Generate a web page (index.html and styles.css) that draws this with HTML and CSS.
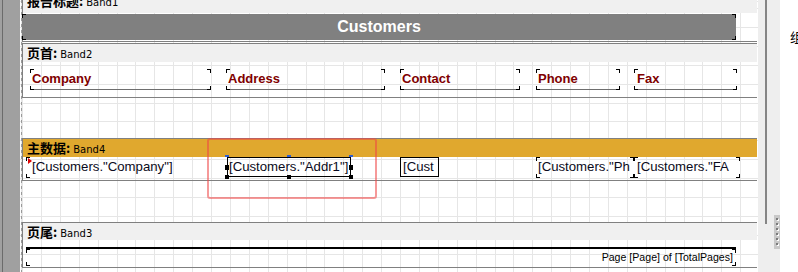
FILE: index.html
```html
<!DOCTYPE html>
<html lang="zh-CN">
<head>
    <meta charset="UTF-8">
    <title>报表设计器</title>
    <link rel="stylesheet" href="styles.css">
</head>
<body>
<div class="designer">
    <div class="gutter"></div>

    <div class="page">
        <div class="band band-title">
            <div class="band-head"><b>报告标题:</b><span>Band1</span></div>
            <div class="band-body">
                <div class="title-bar marks">Customers</div>
            </div>
        </div>

        <div class="band band-header">
            <div class="band-head"><b>页首:</b><span>Band2</span></div>
            <div class="band-body">
                <div class="cell head h-company">Company</div>
                <div class="cell head h-address">Address</div>
                <div class="cell head h-contact">Contact</div>
                <div class="cell head h-phone">Phone</div>
                <div class="cell head h-fax">Fax</div>
            </div>
        </div>

        <div class="band band-data">
            <div class="band-head"><b>主数据:</b><span>Band4</span></div>
            <div class="band-body">
                <div class="cell data d-company left-marks"><span class="flag"></span>[Customers."Company"]</div>
                <div class="cell data d-addr">[Customers."Addr1"]
                    <span class="hdl blue tl"></span><span class="hdl blue tm"></span><span class="hdl blue tr"></span>
                    <span class="hdl ml"></span><span class="hdl mr"></span>
                    <span class="hdl bl"></span><span class="hdl bm"></span><span class="hdl br"></span>
                </div>
                <div class="cell data d-contact">[Cust</div>
                <div class="cell data d-phone marks">[Customers."Ph</div>
                <div class="cell data d-fax marks">[Customers."FA</div>
            </div>
        </div>

        <div class="band band-footer">
            <div class="band-head"><b>页尾:</b><span>Band3</span></div>
            <div class="band-body">
                <div class="page-no marks">Page [Page] of [TotalPages]</div>
            </div>
        </div>

        <div class="highlight"></div>
    </div>

    <div class="scroll"><div class="thumb"></div></div>
    <div class="splitter">
        <div class="grip"><i></i><i></i><i></i><i></i><i></i><i></i></div>
    </div>
    <div class="side">组</div>
</div>
</body>
</html>
```

FILE: styles.css
```css
* {
    box-sizing: border-box;
}
html, body {
    margin: 0;
    padding: 0;
}
body {
    width: 798px;
    height: 272px;
    overflow: hidden;
    background: #fff;
    font-family: "Liberation Sans", Arial, sans-serif;
    color: #000;
}
:root {
    --mk: linear-gradient(#000, #000);
}
.designer {
    display: flex;
    height: 272px;
}
.gutter {
    width: 20px;
    flex: none;
    background: linear-gradient(to right, #a0a0a0 0 2px, #6b6b6b 2px 3px, #a0a0a0 3px);
}

/* report page with grid */
.page {
    position: relative;
    width: 738px;
    flex: none;
    padding-left: 2px;
    background-color: #fff;
    background-image:
        repeating-linear-gradient(to bottom, #9a9a9a 0 3px, transparent 3px 6px),
        repeating-linear-gradient(to right, #e6e6e6 0 1px, transparent 1px 18.9px),
        repeating-linear-gradient(to bottom, #e6e6e6 0 1px, transparent 1px 18.9px);
    background-position: 1px 0, 2px 0, 0 8px;
    background-size: 1px 100%, auto, auto;
    background-repeat: no-repeat, repeat, repeat;
}

/* bands */
.band {
    margin-right: 1px;
    border: 1px solid #808080;
    border-right: 0;
}
.band-head {
    height: 18px;
    padding-left: 4px;
    background: #f0f0f0;
    font-size: 10px;
    font-family: "DejaVu Sans", sans-serif;
    line-height: 18px;
    white-space: nowrap;
    overflow: hidden;
}
.band-head b {
    font-family: "Noto Sans CJK SC", sans-serif;
    font-size: 13px;
    font-weight: bold;
}
.band-head span {
    margin-left: 3px;
}
.band-title {
    margin-top: -6px;
}
.band-title .band-head {
    line-height: 12px;
}
.band-title .band-body {
    height: 28px;
    padding-top: 1px;
}
.band-header {
    margin-top: 1px;
}
.band-header .band-body {
    display: flex;
    height: 35px;
    padding-top: 7px;
}
.band-data {
    margin-top: 40px;
}
.band-data .band-head {
    background: #e0a82e;
}
.band-data .band-body {
    display: flex;
    height: 23px;
}
.band-footer {
    margin-top: 41px;
}
.band-footer .band-head {
    height: 17px;
    line-height: 17px;
}
.band-footer .band-body {
    height: 27px;
    padding-top: 7px;
    padding-left: 3px;
}

/* corner marks */
.marks {
    background-image: var(--mk), var(--mk), var(--mk), var(--mk), var(--mk), var(--mk), var(--mk), var(--mk);
    background-position: left top, left top, right top, right top, left bottom, left bottom, right bottom, right bottom;
    background-size: 4px 1px, 1px 4px, 4px 1px, 1px 4px, 4px 1px, 1px 4px, 4px 1px, 1px 4px;
    background-repeat: no-repeat;
}
.left-marks {
    background-image: var(--mk), var(--mk), var(--mk), var(--mk);
    background-position: left top, left top, left bottom, left bottom;
    background-size: 4px 1px, 1px 4px, 4px 1px, 1px 4px;
    background-repeat: no-repeat;
}

.title-bar {
    margin-left: -1px;
    width: 714px;
    height: 26px;
    background-color: #808080;
    color: #fff;
    font: bold 16px "Liberation Sans", Arial, sans-serif;
    line-height: 26px;
    text-align: center;
}

/* text objects */
.cell {
    flex: none;
    height: 21px;
    white-space: nowrap;
    overflow: hidden;
}
.head {
    padding: 0 2px;
    color: #800000;
    font: bold 13px "Liberation Sans", Arial, sans-serif;
    line-height: 20px;
    background-image: var(--mk), var(--mk), var(--mk), var(--mk), var(--mk), var(--mk), var(--mk), var(--mk), linear-gradient(#6e6e6e, #6e6e6e);
    background-position: left top, left top, right top, right top, left bottom, left bottom, right bottom, right bottom, left bottom;
    background-size: 4px 1px, 1px 4px, 4px 1px, 1px 4px, 4px 1px, 1px 4px, 4px 1px, 1px 4px, 100% 1px;
    background-repeat: no-repeat;
}
.h-company { margin-left: 7px; width: 181px; }
.h-address { margin-left: 15px; width: 159px; }
.h-contact { margin-left: 15px; width: 120px; }
.h-phone { margin-left: 16px; width: 84px; }
.h-fax { margin-left: 14px; width: 103px; padding-left: 3px; }

.data {
    padding-left: 2px;
    font-size: 13.2px;
    line-height: 19px;
    color: #0a0a20;
}
.d-company {
    position: relative;
    margin-left: 3px;
    width: 180px;
    padding-left: 6px;
}
.flag {
    position: absolute;
    left: 2px;
    top: 1px;
    border-left: 4px solid #e00000;
    border-top: 3px solid transparent;
    border-bottom: 3px solid transparent;
}
.d-addr {
    position: relative;
    overflow: visible;
    margin-left: 21px;
    width: 124px;
    height: 20px;
    padding-left: 1px;
    border: 1px solid #000;
    line-height: 18px;
}
.d-contact {
    margin-left: 49px;
    width: 39px;
    height: 20px;
    border: 1px solid #000;
    line-height: 18px;
}
.d-phone { margin-left: 97px; width: 98px; }
.d-fax { width: 106px; padding-left: 3px; }

/* selection handles */
.hdl {
    position: absolute;
    width: 4px;
    height: 4px;
    background: #000;
}
.hdl.blue {
    height: 2px;
    background: #2f5fd0;
    top: -3px;
}
.tl { left: -3px; }
.tm { left: 59px; }
.tr { right: -3px; }
.ml { left: -3px; top: 7px; height: 5px; }
.mr { right: -3px; top: 7px; height: 5px; }
.bl { left: -3px; bottom: -3px; }
.bm { left: 59px; bottom: -3px; }
.br { right: -3px; bottom: -3px; }

.page-no {
    width: 710px;
    height: 19px;
    padding-right: 3px;
    border-top: 2px solid #000;
    font-size: 10.6px;
    line-height: 16px;
    text-align: right;
    white-space: nowrap;
}

/* annotation frame */
.highlight {
    position: absolute;
    left: 187px;
    top: 138px;
    width: 170px;
    height: 61px;
    border: 2px solid rgba(238, 70, 70, 0.55);
    border-radius: 3px;
}

/* right side */
.scroll {
    display: flex;
    justify-content: flex-end;
    width: 9px;
    flex: none;
    background: #eeeeee;
}
.thumb {
    width: 2px;
    height: 224px;
    background: #858585;
}
.splitter {
    width: 13px;
    flex: none;
    padding: 215px 0 0 7px;
    background: #eeeeee;
}
.grip {
    display: flex;
    flex-direction: column;
    align-items: center;
    gap: 3px;
    width: 6px;
    height: 34px;
    padding-top: 3px;
    background: #c8c8c8;
}
.grip i {
    width: 2px;
    height: 2px;
    background: #7a7a7a;
    box-shadow: 1px 1px 0 #fff;
}
.side {
    flex: 1;
    padding: 27px 0 0 10px;
    background: #fff;
    font: 13px "Noto Sans CJK SC", sans-serif;
    white-space: nowrap;
    overflow: hidden;
}
```
